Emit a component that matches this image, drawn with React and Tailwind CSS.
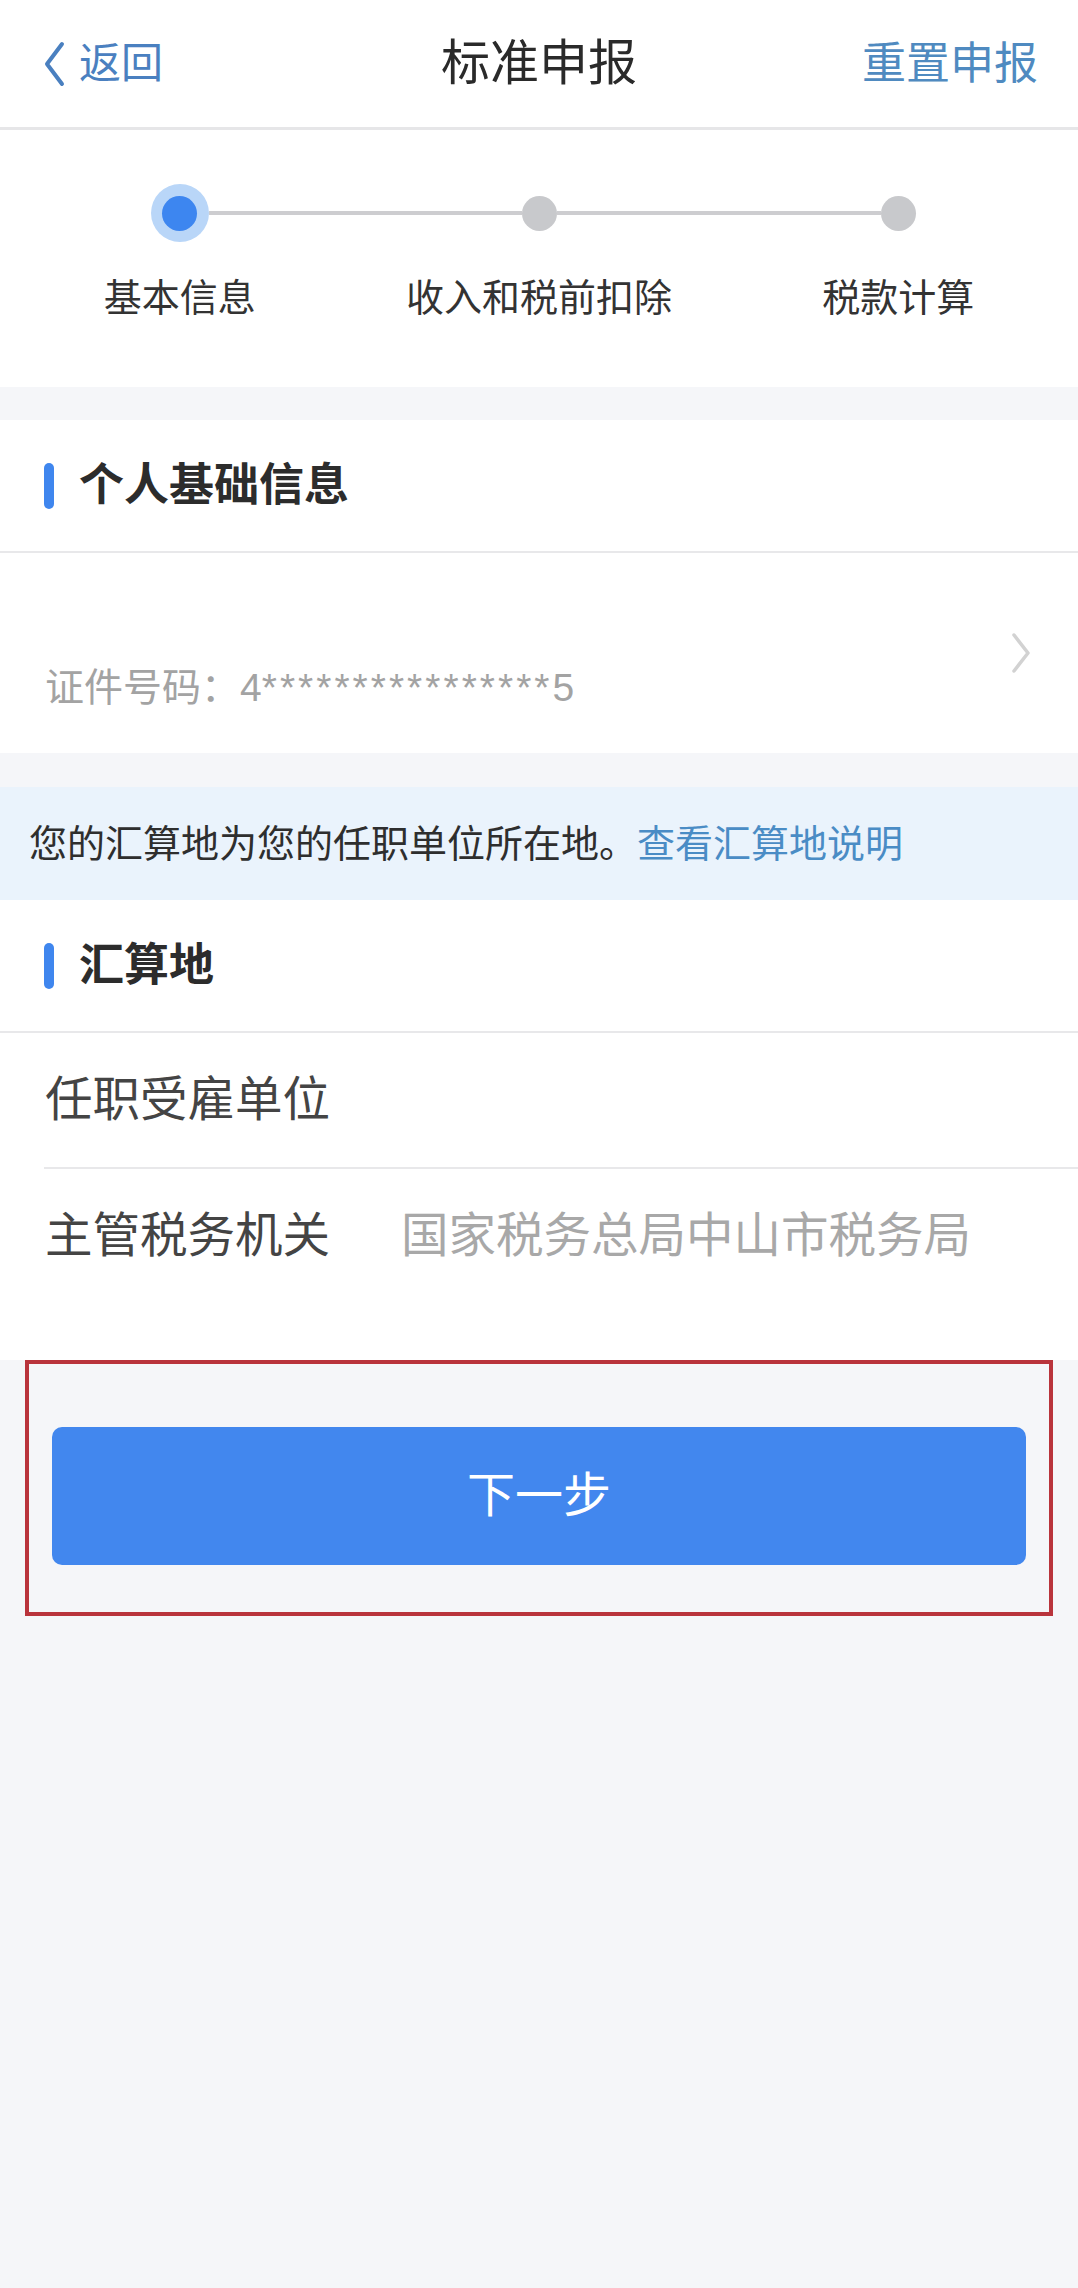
import React from 'react';

const steps = ['基本信息', '收入和税前扣除', '税款计算'];

const SectionTitle = ({ title }) => (
    <div className="h-[131px] flex items-center pl-[44px]">
        <span className="w-[10px] h-[46px] rounded-full bg-[#3f86ee]" />
        <span className="ml-[25px] text-[45px] font-bold text-[#2c2c2c] leading-none">{title}</span>
    </div>
);

const App = () => {
    return (
        <div className="min-h-[2288px] bg-[#f5f6f9] font-['Liberation_Sans','Noto_Sans_CJK_SC',sans-serif]">
            {/* header */}
            <div className="h-[130px] bg-white border-b-[3px] border-[#e6e6e8] grid grid-cols-[1fr_auto_1fr] items-center px-[40px]">
                <div className="flex items-center">
                    <svg width="24" height="46" viewBox="0 0 24 46" className="ml-[2px]">
                        <path d="M20 3 L5 23 L20 43" fill="none" stroke="#4a80c0" strokeWidth="4" strokeLinecap="round" strokeLinejoin="round" />
                    </svg>
                    <span className="ml-[13px] text-[42px] text-[#4a80c0] leading-none">返回</span>
                </div>
                <div className="text-[49px] text-[#2a2a2a] leading-none">标准申报</div>
                <div className="text-right text-[44px] text-[#4f8ac0] leading-none">重置申报</div>
            </div>

            {/* stepper */}
            <div className="bg-white pt-[54px] pb-[66px] grid grid-cols-3">
                {steps.map((s, i) => (
                    <div key={s} className="flex flex-col items-center">
                        <div className="w-full h-[58px] flex items-center">
                            <div className={`flex-1 h-[4px] ${i === 0 ? 'bg-transparent' : 'bg-[#cdcdd0]'}`} />
                            {i === 0 ? (
                                <div className="w-[58px] h-[58px] rounded-full bg-[#b9d6f8] flex items-center justify-center">
                                    <div className="w-[35px] h-[35px] rounded-full bg-[#3d86f0]" />
                                </div>
                            ) : (
                                <div className="w-[35px] h-[35px] rounded-full bg-[#c8c9cc]" />
                            )}
                            <div className={`flex-1 h-[4px] ${i === steps.length - 1 ? 'bg-transparent' : 'bg-[#cdcdd0]'}`} />
                        </div>
                        <div className="mt-[33px] text-[38px] leading-[46px] text-[#333]">{s}</div>
                    </div>
                ))}
            </div>

            {/* personal info */}
            <div className="mt-[33px] bg-white">
                <SectionTitle title="个人基础信息" />
                <div className="h-[2px] bg-[#e8e8ea]" />
                <div className="h-[200px] flex items-center pl-[45px] pr-[46px]">
                    <div className="flex-1 mt-[70px] text-[39px] leading-[46px] text-[#a3a3a3]">
                        证件号码：4<span className="tracking-[3px]">****************</span>5
                    </div>
                    <svg width="22" height="42" viewBox="0 0 22 42">
                        <path d="M4 3 L18 21 L4 39" fill="none" stroke="#d2d2d2" strokeWidth="3.5" strokeLinecap="round" strokeLinejoin="round" />
                    </svg>
                </div>
            </div>

            {/* notice */}
            <div className="mt-[34px] h-[113px] bg-[#eaf3fc] flex items-center pl-[29px] text-[38px] leading-none">
                <span className="text-[#2e2e2e]">您的汇算地为您的任职单位所在地。</span>
                <span className="text-[#4a8cc5]">查看汇算地说明</span>
            </div>

            {/* settlement place */}
            <div className="bg-white pb-[57px]">
                <SectionTitle title="汇算地" />
                <div className="h-[2px] bg-[#e8e8ea]" />
                <div className="h-[134px] flex items-center pl-[45px] text-[47.5px] leading-none text-[#444]">
                    任职受雇单位
                </div>
                <div className="ml-[44px] h-[2px] bg-[#e8e8ea]" />
                <div className="h-[134px] flex items-center pl-[45px] text-[47.5px] leading-none">
                    <span className="w-[356px] text-[#444]">主管税务机关</span>
                    <span className="text-[#a8a8a8]">国家税务总局中山市税务局</span>
                </div>
            </div>

            {/* next button, marked */}
            <div className="mx-[25px] h-[256px] border-4 border-[#b9343c] pt-[63px]">
                <button className="mx-[23px] w-[calc(100%-46px)] h-[138px] rounded-[10px] bg-[#4287ee] text-white text-[48px] leading-none">
                    下一步
                </button>
            </div>
        </div>
    );
};

export default App;
